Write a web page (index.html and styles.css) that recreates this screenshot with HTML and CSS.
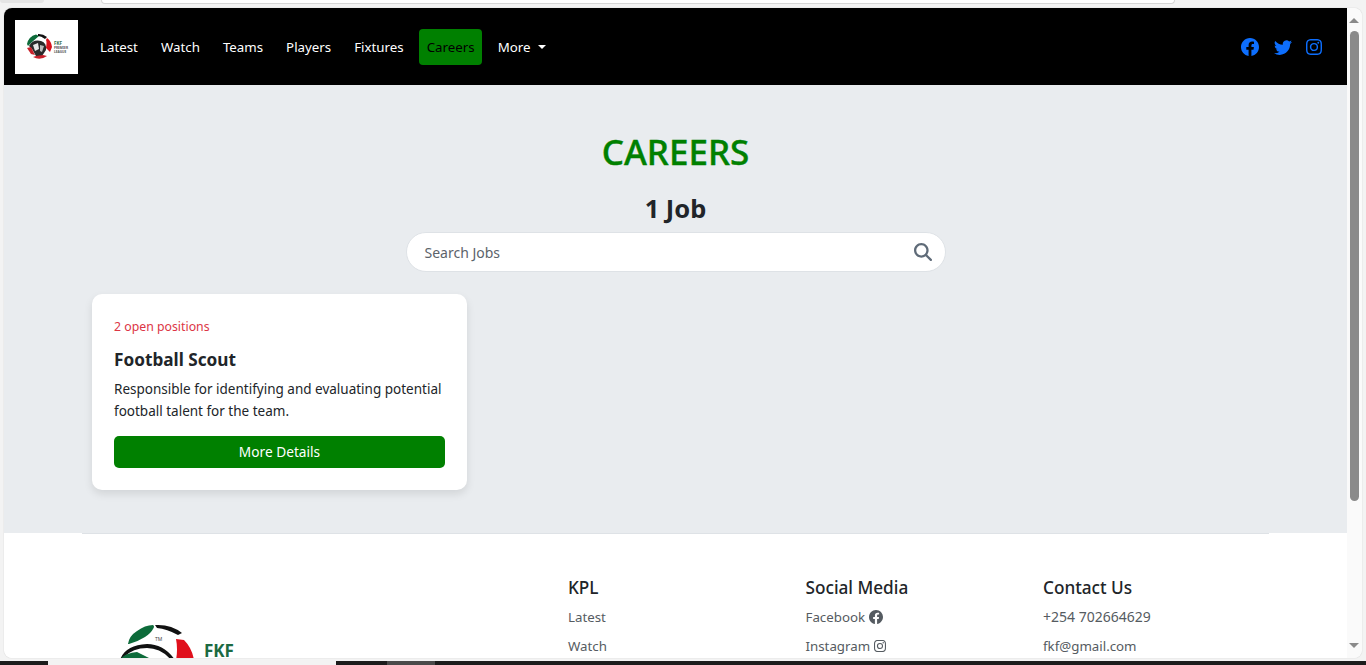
FILE: index.html
```html
<!DOCTYPE html>
<html lang="en">
<head>
<meta charset="utf-8">
<title>Careers</title>
<link rel="stylesheet" href="styles.css">
</head>
<body>
<div class="chrome-top"><div class="chrome-tab"></div><div class="chrome-url"></div></div>
<div class="window">
  <div class="page">
    <nav class="navbar">
      <a class="brand" href="#">
        <svg class="brand-logo" viewBox="0 0 46 30" width="46" height="30" aria-hidden="true">
          <circle cx="15" cy="15" r="12" fill="#fff"/>
          <path d="M3 12 A12.500 12.500 0 0 1 12 2.500 L15 4 L8 10 L4 14Z" fill="#0d6b3a"/>
          <path d="M14 2 A13 13 0 0 1 23 5 L21 7 Q17 4 14 4Z" fill="#111"/>
          <path d="M23 6 A13 13 0 0 1 28 15 L26 20 L22 16 Q23 10 22 8Z" fill="#d8121c"/>
          <path d="M5 14 Q9 7 17 9 Q23 11 22 18 L18 24 L12 24 L8 17Z" fill="#2a2a2a"/>
          <path d="M9 13 L14 11 L15 17 L11 19Z" fill="#e8e8e8"/>
          <path d="M16 13 L20 14 L18 20 L16 19Z" fill="#bbb"/>
          <path d="M3 16 L7 15 L11 23 L7 22Z" fill="#c8202a"/>
          <path d="M9 25 Q16 29 23 24 L19 23 L12 24Z" fill="#c8202a"/>
          <text x="30" y="13" class="mini-fkf">FKF</text>
          <text x="30" y="17" class="mini-line">PREMIER</text>
          <text x="30" y="21" class="mini-line">LEAGUE</text>
        </svg>
      </a>
      <ul class="nav-links">
        <li><a href="#">Latest</a></li>
        <li><a href="#">Watch</a></li>
        <li><a href="#">Teams</a></li>
        <li><a href="#">Players</a></li>
        <li><a href="#">Fixtures</a></li>
        <li><a class="active" href="#">Careers</a></li>
        <li><a class="dropdown" href="#">More</a></li>
      </ul>
      <div class="nav-social">
        <svg viewBox="0 0 16 16" width="18" height="18"><use href="#i-fb"/></svg>
        <svg viewBox="0 0 16 16" width="18" height="18"><use href="#i-tw"/></svg>
        <svg viewBox="0 0 16 16" width="16" height="16"><use href="#i-ig"/></svg>
      </div>
    </nav>
    <main class="main">
      <h1 class="title">CAREERS</h1>
      <h2 class="count">1 Job</h2>
      <div class="search">
        <span class="search-text">Search Jobs</span>
        <svg class="search-icon" viewBox="0 0 512 512" width="18" height="18"><path fill="#5f6b78" d="M416 208c0 45.900-14.900 88.300-40 122.700L502.600 457.400c12.500 12.500 12.500 32.800 0 45.300s-32.800 12.500-45.300 0L330.700 376c-34.400 25.200-76.800 40-122.700 40C93.100 416 0 322.900 0 208S93.100 0 208 0S416 93.100 416 208zM208 352a144 144 0 1 0 0-288 144 144 0 1 0 0 288z"/></svg>
      </div>
      <div class="cards">
        <article class="card">
          <p class="positions">2 open positions</p>
          <h3 class="job">Football Scout</h3>
          <p class="desc">Responsible for identifying and evaluating potential football talent for the team.</p>
          <a class="btn" href="#">More Details</a>
        </article>
      </div>
    </main>
    <footer class="footer">
      <hr class="rule">
      <div class="footer-grid">
        <div class="footer-logo">
          <svg viewBox="0 0 76 36" width="76" height="36" aria-hidden="true">
            <path d="M9 20 Q10 12 18 7 Q26 1 34 1 Q36 2 34 5 Q32 9 26 13 Q18 18 10 20Z" fill="#0d6b3a"/>
            <path d="M36 1 Q52 0 63 9 L59 11 Q48 5 38 4Z" fill="#111"/>
            <path d="M57 15 L65 16 Q73 24 75 36 L57 36 Q59 25 57 15Z" fill="#e0101c"/>
            <path d="M1 36 Q6 21 28 20 Q45 20 56 36 L52 36 Q42 24 28 24 Q14 24 5 33Z" fill="#111"/>
            <path d="M1 36 Q5 29 18 28 L34 36Z" fill="#0d6b3a"/>
            <text x="36" y="17" class="tm">TM</text>
          </svg>
          <span class="fkf">FKF</span>
        </div>
        <div class="footer-col">
          <h4>KPL</h4>
          <a href="#">Latest</a>
          <a href="#">Watch</a>
        </div>
        <div class="footer-col">
          <h4>Social Media</h4>
          <a href="#">Facebook <svg viewBox="0 0 16 16" width="14" height="14"><use href="#i-fb"/></svg></a>
          <a href="#">Instagram <svg viewBox="0 0 16 16" width="12" height="12"><use href="#i-ig"/></svg></a>
        </div>
        <div class="footer-col">
          <h4>Contact Us</h4>
          <a class="tel" href="#">+254 702664629</a>
          <a href="#">fkf@gmail.com</a>
        </div>
      </div>
    </footer>
  </div>
  <div class="scrollbar">
    <span class="arrow up"></span>
    <span class="thumb"></span>
    <span class="arrow down"></span>
  </div>
</div>
<div class="taskbar"><span class="task-light"></span><span class="task-gray"></span></div>
<svg class="defs" width="0" height="0">
  <symbol id="i-fb" viewBox="0 0 16 16"><path fill="currentColor" d="M16 8.049c0-4.446-3.582-8.050-8-8.050C3.580 0-.002 3.603-.002 8.050c0 4.017 2.926 7.347 6.750 7.951v-5.625h-2.030V8.050H6.750V6.275c0-2.017 1.195-3.131 3.022-3.131.876 0 1.791.157 1.791.157v1.980h-1.009c-.993 0-1.303.621-1.303 1.258v1.510h2.218l-.354 2.326H9.250V16c3.824-.604 6.750-3.934 6.750-7.951z"/></symbol>
  <symbol id="i-tw" viewBox="0 0 16 16"><path fill="currentColor" d="M5.026 15c6.038 0 9.341-5.003 9.341-9.334 0-.140 0-.282-.006-.422A6.685 6.685 0 0 0 16 3.542a6.658 6.658 0 0 1-1.889.518 3.301 3.301 0 0 0 1.447-1.817 6.533 6.533 0 0 1-2.087.793A3.286 3.286 0 0 0 7.875 6.030a9.325 9.325 0 0 1-6.767-3.429 3.289 3.289 0 0 0 1.018 4.382A3.323 3.323 0 0 1 .640 6.575v.045a3.288 3.288 0 0 0 2.632 3.218 3.203 3.203 0 0 1-.865.115 3.230 3.230 0 0 1-.614-.057 3.283 3.283 0 0 0 3.067 2.277A6.588 6.588 0 0 1 .780 13.580a6.320 6.320 0 0 1-.780-.045A9.344 9.344 0 0 0 5.026 15z"/></symbol>
  <symbol id="i-ig" viewBox="0 0 16 16"><path fill="currentColor" d="M8 0C5.829 0 5.556.010 4.703.048 3.850.088 3.269.222 2.760.420a3.917 3.917 0 0 0-1.417.923A3.927 3.927 0 0 0 .420 2.760C.222 3.268.087 3.850.048 4.700.010 5.555 0 5.827 0 8.001c0 2.172.010 2.444.048 3.297.040.852.174 1.433.372 1.942.205.526.478.972.923 1.417.444.445.89.719 1.416.923.510.198 1.090.333 1.942.372C5.555 15.990 5.827 16 8 16s2.444-.010 3.298-.048c.851-.040 1.434-.174 1.943-.372a3.916 3.916 0 0 0 1.416-.923c.445-.445.718-.891.923-1.417.197-.509.332-1.090.372-1.942C15.990 10.445 16 10.173 16 8s-.010-2.445-.048-3.299c-.040-.851-.175-1.433-.372-1.941a3.926 3.926 0 0 0-.923-1.417A3.911 3.911 0 0 0 13.240.420c-.510-.198-1.092-.333-1.943-.372C10.443.010 10.172 0 7.998 0h.003zm-.717 1.442h.718c2.136 0 2.389.007 3.232.046.780.035 1.204.166 1.486.275.373.145.640.319.920.599.280.280.453.546.598.920.110.281.240.705.275 1.485.039.843.047 1.096.047 3.231s-.008 2.389-.047 3.232c-.035.780-.166 1.203-.275 1.485a2.470 2.470 0 0 1-.599.919c-.280.280-.546.453-.920.598-.280.110-.704.240-1.485.276-.843.038-1.096.047-3.232.047s-2.390-.009-3.233-.047c-.780-.036-1.203-.166-1.485-.276a2.478 2.478 0 0 1-.920-.598 2.480 2.480 0 0 1-.600-.920c-.109-.281-.240-.705-.275-1.485-.038-.843-.046-1.096-.046-3.233 0-2.136.008-2.388.046-3.231.036-.780.166-1.204.276-1.486.145-.373.319-.640.599-.920.280-.280.546-.453.920-.598.282-.110.705-.240 1.485-.276.738-.034 1.024-.044 2.515-.045v.002zm4.988 1.328a.960.960 0 1 0 0 1.920.960.960 0 0 0 0-1.920zm-4.270 1.122a4.109 4.109 0 1 0 0 8.217 4.109 4.109 0 0 0 0-8.217zm0 1.441a2.667 2.667 0 1 1 0 5.334 2.667 2.667 0 0 1 0-5.334z"/></symbol>
</svg>
</body>
</html>
```
FILE: styles.css
```css
* { box-sizing: border-box; }
html, body { margin: 0; height: 100%; overflow: hidden; }
body {
  background: #f3f3f3;
  font-family: "Noto Sans", "Open Sans", sans-serif;
  color: #212529;
  display: flex;
  flex-direction: column;
}
a { text-decoration: none; color: inherit; }
.defs { position: absolute; }
.chrome-top { height: 8px; flex: none; display: flex; gap: 57px; overflow: hidden; }
.chrome-tab { width: 44px; height: 3px; background: #e5e5e5; border-radius: 0 0 6px 6px; }
.chrome-url { width: 1074px; height: 4px; background: #fff; border: 1px solid #d6d6d6; border-top: 0; border-radius: 0 0 10px 10px; }
.window {
  flex: none;
  height: 650px;
  margin: 0 4px 0 4px;
  display: flex;
  background: #fff;
  border-radius: 8px;
  overflow: hidden;
  box-shadow: 0 0 1px #aaa;
}
.page { flex: none; width: 1343px; overflow: hidden; }
.navbar {
  height: 77px;
  background: #000;
  display: flex;
  align-items: center;
  padding: 0 11px;
}
.brand { width: 63px; height: 54px; background: #fff; display: flex; align-items: center; justify-content: center; margin-right: 14px; }
.mini-fkf { font-size: 4.500px; font-weight: 700; fill: #2c6a45; }
.mini-line { font-size: 3.200px; font-weight: 700; fill: #555; }
.nav-links { list-style: none; margin: 0; padding: 0; display: flex; align-items: center; }
.nav-links a { display: block; padding: 8px; font-size: 13.300px; line-height: 20px; color: #fff; border-radius: 4px; margin-right: 7px; }
.nav-links a.active { padding: 8px 7px 8px 8px; background: #008000; color: #000; margin-right: 8px; }
.dropdown::after {
  content: "";
  display: inline-block;
  margin-left: 8px;
  vertical-align: 3px;
  border-top: 4px solid #fff;
  border-left: 4px solid transparent;
  border-right: 4px solid transparent;
}
.nav-social { margin-left: auto; display: flex; align-items: center; gap: 14.500px; color: #0d6efd; padding-right: 14px; }
.main { background: #e9ecef; height: 448px; padding-top: 45px; display: flex; flex-direction: column; align-items: center; }
.title { margin: 0; font-size: 35px; line-height: 43px; font-weight: 500; color: #008000; -webkit-text-stroke: .4px #008000; }
.count { margin: 21px 0 0; font-size: 25.500px; line-height: 29px; font-weight: 700; }
.search {
  margin-top: 9px;
  width: 540px;
  height: 40px;
  background: #fff;
  border: 1px solid #dee2e6;
  border-radius: 20px;
  display: flex;
  align-items: center;
  justify-content: space-between;
  padding: 0 13px 0 18px;
}
.search-text { font-size: 14px; line-height: 20px; padding-top: 1px; color: #5c636a; }
.cards { align-self: stretch; padding: 22px 0 0 88px; }
.card {
  width: 375px;
  height: 196px;
  background: #fff;
  border-radius: 10px;
  padding: 22px;
  box-shadow: 0 4px 8px rgba(0,0,0,.1);
  display: flex;
  flex-direction: column;
}
.positions { margin: 1px 0 0; font-size: 12.300px; line-height: 20px; color: #dc3545; }
.job { margin: 12px 0 0; font-size: 17.200px; line-height: 22px; font-weight: 700; }
.desc { margin: 7px 0 0; font-size: 13.500px; line-height: 22px; }
.btn { margin-top: 14px; height: 32px; line-height: 32px; text-align: center; background: #008000; color: #fff; font-size: 13.700px; border-radius: 5px; }
.footer { background: #fff; }
.rule { margin: 0 78px; border: 0; border-top: 1px solid #dee2e6; }
.footer-grid { display: grid; grid-template-columns: 485px 237.500px 237.500px 1fr; padding: 43px 0 0 79px; }
.footer-logo { padding: 47px 0 0 36px; display: flex; align-items: flex-start; }
.footer-logo svg { flex: none; }
.tm { font-size: 5px; fill: #444; }
.fkf { font-size: 17px; font-weight: 700; color: #1c6a42; line-height: 14px; margin: 20px 0 0 9px; }
.footer-col h4 { margin: 0; font-size: 17.200px; line-height: 21px; font-weight: 500; }
.footer-col a { display: flex; align-items: center; gap: 4px; margin-top: 9px; font-size: 13.300px; line-height: 20px; color: #555b61; }
.footer-col a.tel { font-size: 14px; }
.scrollbar { flex: 1; background: #fafafa; position: relative; }
.thumb { position: absolute; left: 3px; right: 3px; top: 23px; height: 470px; background: #8a8a8a; border-radius: 6px; }
.arrow { position: absolute; left: 2px; width: 0; height: 0; border-left: 5px solid transparent; border-right: 5px solid transparent; }
.arrow.up { top: 10px; border-bottom: 5px solid #8a8a8a; }
.arrow.down { bottom: 10px; border-top: 5px solid #8a8a8a; }
.taskbar { flex: 1; margin-top: 3px; background: #1c1c1c; position: relative; }
.task-light { position: absolute; left: 48px; top: 0; width: 288px; height: 100%; background: #f3f3f3; }
.task-gray { position: absolute; left: 387px; top: 0; width: 48px; height: 100%; background: #4a4a4a; }
```
